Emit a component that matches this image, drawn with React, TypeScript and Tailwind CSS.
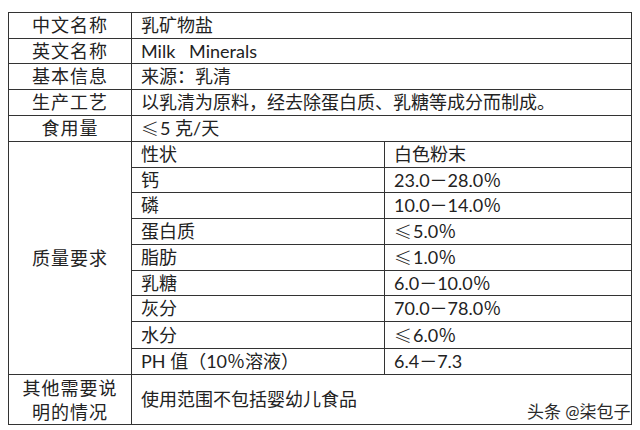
const font = { fontFamily: "Lato, 'Noto Sans CJK SC', sans-serif" }

const basics = [
  { label: "中文名称", value: "乳矿物盐" },
  { label: "英文名称", value: "Milk\u00a0\u00a0\u00a0Minerals" },
  { label: "基本信息", value: "来源：乳清" },
  { label: "生产工艺", value: "以乳清为原料，经去除蛋白质、乳糖等成分而制成。" },
  { label: "食用量", value: "≤5 克/天" },
]

const quality = [
  { item: "性状", value: "白色粉末" },
  { item: "钙", value: "23.0－28.0％" },
  { item: "磷", value: "10.0－14.0％" },
  { item: "蛋白质", value: "≤5.0％" },
  { item: "脂肪", value: "≤1.0％" },
  { item: "乳糖", value: "6.0－10.0％" },
  { item: "灰分", value: "70.0－78.0％" },
  { item: "水分", value: "≤6.0％" },
  { item: "PH 值（10％溶液）", value: "6.4－7.3" },
]

// the ≤ sign comes from the CJK font, the Latin one is too small
function Text({ value }: { value: string }) {
  if (!value.startsWith("≤")) return <>{value}</>
  return (
    <>
      <span className="mr-[1px] font-light" style={{ fontFamily: "'Noto Sans CJK SC', sans-serif" }}>≤</span>
      {value.slice(1)}
    </>
  )
}

export default function App() {
  return (
    <div className="relative h-[430px] w-[640px] bg-white pl-2 pt-3 text-[18px] text-[#222]" style={font}>
      <div className="grid w-[624px] grid-cols-[122px_252px_246px] grid-rows-[25px_24px_25px_25px_25px_25px_24px_25px_25px_25px_24px_25px_26px_25px_49px] gap-px bg-[#333] p-px">
        {basics.map((row) => (
          <Row key={row.label} label={row.label} value={row.value} />
        ))}

        <div className="row-span-9 flex items-center justify-center bg-white tracking-[1px]">质量要求</div>
        {quality.map((q) => (
          <QualityRow key={q.item} item={q.item} value={q.value} />
        ))}

        <div className="flex flex-col items-center justify-center bg-white leading-[24px] tracking-[1px]">
          <span>其他需要说</span>
          <span>明的情况</span>
        </div>
        <div className="col-span-2 flex items-center bg-white pl-[9px]">使用范围不包括婴幼儿食品</div>
      </div>

      <div className="absolute left-[527px] top-[399px] text-[17px] text-[#2a2a2a] [text-shadow:0_0_2px_#fff,0_0_2px_#fff]">头条 @柒包子</div>
    </div>
  )
}

function Row({ label, value }: { label: string; value: string }) {
  return (
    <>
      <div className="flex items-center justify-center bg-white tracking-[1px]">{label}</div>
      <div className="col-span-2 flex items-center bg-white pl-[9px]">
        <Text value={value} />
      </div>
    </>
  )
}

function QualityRow({ item, value }: { item: string; value: string }) {
  return (
    <>
      <div className="flex items-center bg-white pl-[9px]">{item}</div>
      <div className="flex items-center bg-white pl-[9px]">
        <Text value={value} />
      </div>
    </>
  )
}
